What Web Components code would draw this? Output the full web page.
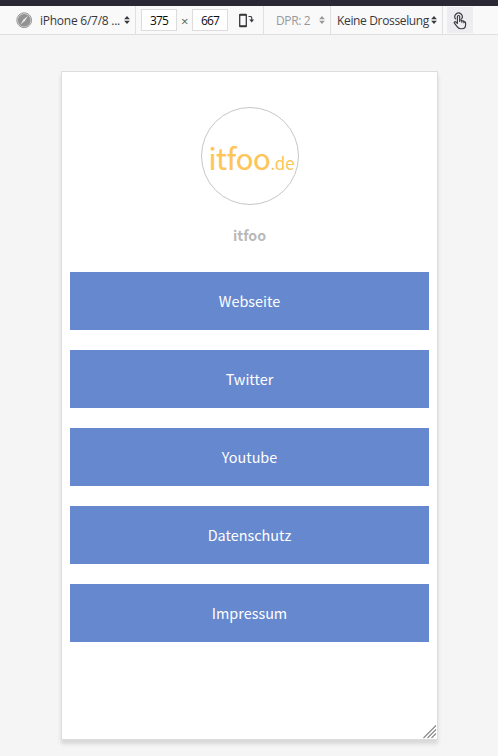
<!DOCTYPE html>
<html lang="de">
<head>
<meta charset="utf-8">
<title>itfoo</title>
<style>
html,body{margin:0;height:100%;background:#f5f5f5}
body{overflow:hidden}
</style>
</head>
<body>
<device-view></device-view>
<script>
const define = (name, html) => {
  const t = document.createElement('template');
  t.innerHTML = html;
  customElements.define(name, class extends HTMLElement {
    constructor() {
      super();
      this.attachShadow({mode: 'open'}).appendChild(t.content.cloneNode(true));
    }
  });
};

define('sort-arrows', `
<style>:host{display:block;width:6px;height:8px;color:#38383d}svg{display:block}</style>
<svg width="6" height="8" viewBox="0 0 6 8" fill="currentColor"><path d="M3 0 5.9 3.2H.1zM3 8 .1 4.8h5.8z"/></svg>`);

define('tool-select', `
<style>
:host{display:flex;align-items:center;justify-content:space-between;box-sizing:border-box;height:28px;white-space:nowrap}
sort-arrows{color:inherit;flex:none}
::slotted(span){padding-top:1px}
</style><slot></slot><sort-arrows></sort-arrows>`);

define('size-field', `
<style>
:host{display:flex;align-items:center;justify-content:center;box-sizing:border-box;width:36px;height:22px;padding-top:1px;border:1px solid #dcdcde;background:#fff;color:#0c0c0d;letter-spacing:-.8px}
</style><slot></slot>`);

define('device-toolbar', `
<style>
:host{display:flex;align-items:center;box-sizing:border-box;height:35px;border-top:6px solid #2a2835;border-bottom:1px solid #e0e0e2;background:#f9f9fa;
 font:12px/16px "Open Sans","Noto Sans",sans-serif;letter-spacing:-.35px;color:#38383d}
svg{display:block;flex:none}
.globe{margin-left:16px}
.device{width:90px;margin-left:7px;letter-spacing:-.25px}
.sep{width:1px;height:28px;background:#e0e0e2;flex:none}
.x{width:15px;text-align:center;color:#4d6650;font-size:13px;padding-top:1px}
.w{margin-left:5px}
.rot{margin-left:10px;margin-right:10px}
.dpr{width:49px;margin:0 5px 0 12px;color:#989899}
.thr{width:100px;margin:0 5px 0 6px}
.touch{width:26px;height:26px;margin-left:4px;background:#ededf0;display:flex;align-items:center;justify-content:center}
.touch svg{position:relative;top:1px}
</style>
<svg class="globe" width="17" height="17" viewBox="0 0 17 17"><circle cx="8.2" cy="8.2" r="7.4" fill="#dadada" stroke="#999" stroke-width="1"/><circle cx="8.2" cy="8.2" r="6.3" fill="#929292"/><path d="M12 3.9 7.5 7.5 4.4 12.5 8.9 8.9z" fill="#e8e8e8"/></svg>
<tool-select class="device"><span>iPhone 6/7/8 ...</span></tool-select>
<div class="sep" style="margin-left:5px"></div>
<size-field class="w">375</size-field><span class="x">×</span><size-field>667</size-field>
<svg class="rot" width="17" height="16" viewBox="0 0 17 16" fill="none" stroke="#38383d"><rect x="1.7" y="2.5" width="6.6" height="12" rx=".6" stroke-width="1.3"/><path d="M1.5 2.9h7M1.5 14.1h7" stroke-width="1.5"/><path d="M10.5 4.5h2.2q1 0 1 1v3" stroke-width="1.1"/><path d="M11.3 7.6h4.8l-2.4 2.8z" fill="#38383d" stroke="none"/></svg>
<div class="sep" style="margin-left:-2px"></div>
<tool-select class="dpr"><span>DPR: 2</span></tool-select>
<div class="sep"></div>
<tool-select class="thr"><span>Keine Drosselung</span></tool-select>
<div class="sep"></div>
<div class="touch"><svg width="16" height="18" viewBox="0 0 16 18" fill="none" stroke="#38383d" stroke-width="1.15" stroke-linecap="round" stroke-linejoin="round"><path d="M5.4 11.4V4.6a1.15 1.15 0 0 1 2.3 0v4.8M7.7 8.3q1.8-.8 2.1.7 1.8-.6 2.1.7 1.7-.2 1.7 1.3v1.7c0 2.5-1.2 4-3.6 4H8.4c-1.5 0-2.4-.8-3.3-2l-2.7-3.6c-.7-1 .5-1.9 1.4-1.1l1.6 1.4M9.8 9v1.3M11.9 9.8v1"/><path d="M3.5 6.9a3.7 3.7 0 1 1 6.1 0"/></svg></div>`);

define('link-button', `
<style>
:host{display:flex;align-items:center;justify-content:center;height:58px;background:#6688ce;color:#fff;font-size:14.4px;line-height:24px}
</style><slot></slot>`);

define('brand-logo', `
<style>
:host{display:flex;align-items:baseline;justify-content:center;box-sizing:border-box;width:98px;height:98px;border:1px solid #c6c6c6;border-radius:50%;color:#fec557;white-space:nowrap;line-height:98px;padding-left:4px}
.a{font-size:29.3px;letter-spacing:-.35px;-webkit-text-stroke:.2px #fec557}.b{font-size:17px;letter-spacing:-.1px}
</style><span class="a">itfoo</span><span class="b">.de</span>`);

define('phone-screen', `
<style>
:host{display:flex;flex-direction:column;align-items:center;position:relative;box-sizing:border-box;width:377px;height:669px;border:1px solid #ddd;background:#fff;box-shadow:0 4px 4px rgba(0,0,0,.12);padding:35px 8px 0;
 font-family:"Noto Sans CJK SC","Noto Sans",sans-serif}
h1{margin:18px 0 25px;font-size:14.2px;line-height:24px;font-weight:700;color:#b9b9b9}
nav{display:flex;flex-direction:column;gap:20px;align-self:stretch}
.grip{position:absolute;right:0;bottom:0}
</style>
<brand-logo></brand-logo><h1>itfoo</h1>
<nav><link-button>Webseite</link-button><link-button>Twitter</link-button><link-button>Youtube</link-button><link-button>Datenschutz</link-button><link-button>Impressum</link-button></nav>
<svg class="grip" width="14" height="14" viewBox="0 0 14 14" stroke="#888" stroke-width="1.1"><path d="M.5 13 13 .5M4.5 13 13 4.5M8.5 13 13 8.5"/></svg>`);

define('device-view', `
<style>:host{display:flex;flex-direction:column}phone-screen{margin:36px 0 0 61px}</style>
<device-toolbar></device-toolbar><phone-screen></phone-screen>`);
</script>
</body>
</html>
